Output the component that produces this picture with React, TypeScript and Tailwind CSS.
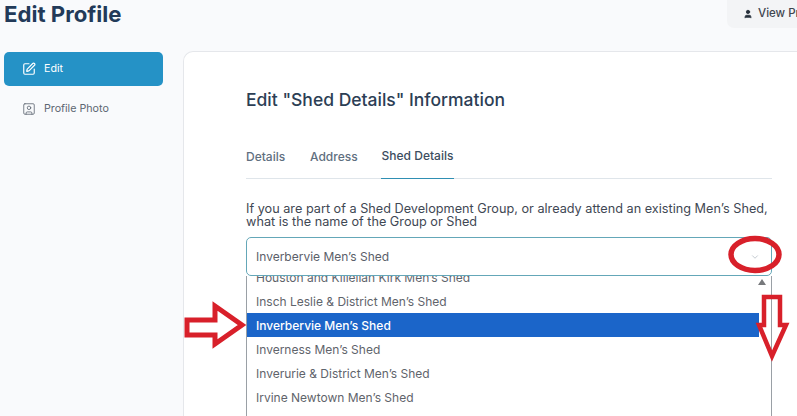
import { SquarePen, SquareUser, User, ChevronDown } from "lucide-react";

const options = [
  "Houston and Killellan Kirk Men’s Shed",
  "Insch Leslie & District Men’s Shed",
  "Inverbervie Men’s Shed",
  "Inverness Men’s Shed",
  "Inverurie & District Men’s Shed",
  "Irvine Newtown Men’s Shed",
];

export default function App() {
  return (
    <div className="relative h-[416px] w-[797px] overflow-hidden bg-[#f9fafc] font-['Inter',sans-serif]">
      <header className="flex h-[51px] items-start justify-between pl-[4px]">
        <h1 className="text-[22.2px] font-bold leading-[27px] text-[#223a59]">Edit Profile</h1>
        <div className="flex h-[28px] w-[70px] shrink-0 items-center gap-[5px] overflow-hidden whitespace-nowrap rounded-bl-[7px] bg-[#f3f4f6] pl-[16px] text-[11.5px] font-medium text-[#3f4650]">
          <User size={10} fill="#26303c" stroke="#26303c" className="shrink-0" />
          View Profile
        </div>
      </header>
      <main className="flex items-start">
        <nav className="ml-[4px] mr-[20px] w-[159px] shrink-0 pt-px text-[10.7px]">
          <div className="flex h-[34px] items-center gap-[8px] rounded-[5px] bg-[#2592c6] pl-[18px] text-white">
            <SquarePen size={14} />
            Edit
          </div>
          <div className="mt-[6px] flex h-[34px] items-center gap-[8px] pl-[18px] text-[#5d6672]">
            <SquareUser size={14} strokeWidth={1.4} />
            Profile Photo
          </div>
        </nav>
        <section className="h-[400px] flex-1 rounded-tl-[10px] border border-r-0 border-[#e5e7eb] bg-white pl-[62px] pt-[36px]">
          <h2 className="text-[17.5px] font-medium leading-[24px] text-[#2c3e55]">Edit "Shed Details" Information</h2>
          <div className="mt-[28px] w-[526px]">
            <div className="flex h-[39px] border-b border-[#dfe5ea] text-[12px] font-medium text-[#5f6f80]">
              <span className="w-[64px] pt-[8px]">Details</span>
              <span className="w-[71px] pt-[8px]">Address</span>
              <span className="-mb-px w-[73px] border-b border-[#2f8fb3] pt-[7px] text-center text-[#3c4d60]">Shed Details</span>
            </div>
            <p className="mt-[23px] text-[12.7px] leading-[13px] text-[#3f4854]">
              If you are part of a Shed Development Group, or already attend an existing Men’s Shed,
              <br />
              what is the name of the Group or Shed
            </p>
            <div className="mt-[9px] flex h-[39px] items-center justify-between rounded-[5px] border border-[#64a7b8] bg-white pl-[9px] pr-[11px] text-[12px] text-[#5b6069]">
              Inverbervie Men’s Shed
              <ChevronDown size={10} className="text-[#b9c0c8]" />
            </div>
            <div className="relative h-[150px] overflow-hidden border-x border-[#9aa0a6] bg-white text-[12px] text-[#5f646b]">
              <div className="-mt-[11px] pr-[12px]">
                {options.map((o) => (
                  <div
                    key={o}
                    className={
                      o === "Inverbervie Men’s Shed"
                        ? "flex h-[24px] items-center bg-[#1b65c9] pl-[9px] pt-px font-medium text-white"
                        : "flex h-[24px] items-center pl-[9px] pt-px"
                    }
                  >
                    {o}
                  </div>
                ))}
              </div>
              <div className="absolute right-[5px] top-[3px] h-0 w-0 border-x-[4px] border-b-[6px] border-x-transparent border-b-[#77797c]" />
            </div>
          </div>
        </section>
      </main>
      <svg className="absolute left-0 top-0" width="797" height="416" viewBox="0 0 797 416" fill="none">
        <ellipse cx="755" cy="254.5" rx="24" ry="16" stroke="#d8202a" strokeWidth="5.5" />
        <path d="M187 320H215V306L242 325L215 344V335H187Z" stroke="#d8202a" strokeWidth="5" strokeLinejoin="miter" />
        <path d="M764 297H780V325H786L772 356L759 325H764Z" stroke="#d8202a" strokeWidth="4.5" strokeLinejoin="miter" />
      </svg>
    </div>
  );
}
